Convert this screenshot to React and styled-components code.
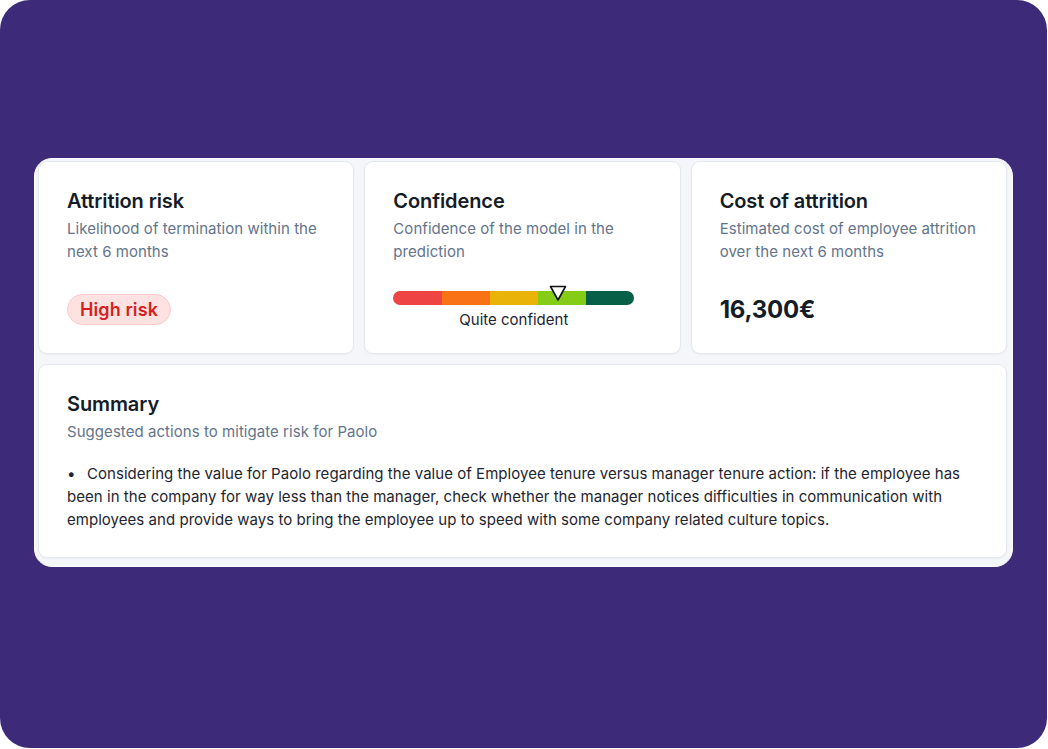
import React from 'react';
import styled, { createGlobalStyle } from 'styled-components';

const GlobalStyle = createGlobalStyle`
	html, body {
		margin: 0;
		padding: 0;
		background: #ffffff;
	}
	body {
		font-family: Inter, "Noto Sans", "Liberation Sans", sans-serif;
		-webkit-font-smoothing: antialiased;
	}
`;

const Backdrop = styled.div`
	width: 1047px;
	height: 748px;
	background: #3d2b7a;
	border-radius: 30px;
	box-sizing: border-box;
	padding: 158px 34px 0 34px;
`;

const Panel = styled.div`
	background: #f4f6fa;
	border: 1px solid #fbfcfe;
	border-radius: 18px;
	padding: 2px 5px 8px 3px;
	display: flex;
	flex-direction: column;
	gap: 10px;
`;

const Row = styled.div`
	display: grid;
	grid-template-columns: repeat(3, 1fr);
	gap: 10px;
`;

const Card = styled.div`
	background: #ffffff;
	border: 1px solid #e4e8ef;
	border-radius: 9px;
	box-shadow: 0 1px 2px rgba(15, 23, 42, 0.04);
	height: ${(p) => p.$height || 193}px;
	box-sizing: border-box;
	padding: 25px 28px 0 28px;
	display: flex;
	flex-direction: column;
`;

const Title = styled.h3`
	margin: 0;
	font-size: 20px;
	line-height: 28px;
	font-weight: 600;
	color: #141c28;
	letter-spacing: -0.1px;
`;

const Subtitle = styled.p`
	margin: 2px 0 0 0;
	font-size: 15px;
	line-height: 23px;
	color: #64748b;
	letter-spacing: 0.05px;
`;

const Badge = styled.span`
	align-self: flex-start;
	margin-top: 31px;
	height: 31px;
	box-sizing: border-box;
	padding: 0 12px;
	display: inline-flex;
	align-items: center;
	background: #fee2e2;
	border: 1px solid #fbcaca;
	border-radius: 999px;
	color: #d61f1f;
	font-size: 18px;
	font-weight: 600;
	letter-spacing: 0.1px;
`;

const Meter = styled.div`
	margin-top: 22px;
	width: 241px;
	display: flex;
	flex-direction: column;
	align-items: center;
`;

const BarWrap = styled.div`
	position: relative;
	width: 100%;
	padding-top: 6px;
`;

const Bar = styled.div`
	display: flex;
	height: 14px;
	border-radius: 7px;
	overflow: hidden;
`;

const Segment = styled.div`
	flex: 1;
	background: ${(p) => p.$color};
`;

const Marker = styled.svg`
	position: absolute;
	top: 0;
	transform: translateX(-50%);
`;

const MeterLabel = styled.div`
	margin-top: 5px;
	font-size: 15px;
	line-height: 20px;
	color: #1e2530;
`;

const Amount = styled.div`
	margin-top: 31px;
	font-size: 24px;
	line-height: 32px;
	font-weight: 700;
	color: #141c28;
	letter-spacing: -0.2px;
`;

const List = styled.ul`
	margin: 19px 0 0 0;
	padding: 0;
	list-style: none;
`;

const Item = styled.li`
	font-size: 15px;
	line-height: 23px;
	color: #1e2530;
	letter-spacing: 0.04px;

	&::before {
		content: '•';
		display: inline-block;
		width: 20px;
	}
`;

const segments = ['#ef4444', '#f97316', '#eab308', '#84cc16', '#065f46'];

function ConfidenceMeter({ value, label }) {
	return (
		<Meter>
			<BarWrap>
				<Bar>
					{segments.map((c) => (
						<Segment key={c} $color={c} />
					))}
				</Bar>
				<Marker width="20" height="17" viewBox="0 0 20 17" style={{ left: `${value}%` }}>
					<path
						d="M2.5 1.5 H17.5 L10 15 Z"
						fill="#ffffff"
						stroke="#111111"
						strokeWidth="1.6"
						strokeLinejoin="round"
					/>
				</Marker>
			</BarWrap>
			<MeterLabel>{label}</MeterLabel>
		</Meter>
	);
}

function App() {
	return (
		<>
			<GlobalStyle />
			<Backdrop>
				<Panel>
					<Row>
						<Card>
							<Title>Attrition risk</Title>
							<Subtitle>Likelihood of termination within the next 6 months</Subtitle>
							<Badge>High risk</Badge>
						</Card>
						<Card>
							<Title>Confidence</Title>
							<Subtitle>Confidence of the model in the prediction</Subtitle>
							<ConfidenceMeter value={68.5} label="Quite confident" />
						</Card>
						<Card>
							<Title>Cost of attrition</Title>
							<Subtitle>Estimated cost of employee attrition over the next 6 months</Subtitle>
							<Amount>16,300€</Amount>
						</Card>
					</Row>
					<Card $height={194}>
						<Title>Summary</Title>
						<Subtitle>Suggested actions to mitigate risk for Paolo</Subtitle>
						<List>
							<Item>
								Considering the value for Paolo regarding the value of Employee tenure versus manager tenure action: if the employee has been in the company for way less than the manager, check whether the manager notices difficulties in communication with employees and provide ways to bring the employee up to speed with some company related culture topics.
							</Item>
						</List>
					</Card>
				</Panel>
			</Backdrop>
		</>
	);
}

export default App;
